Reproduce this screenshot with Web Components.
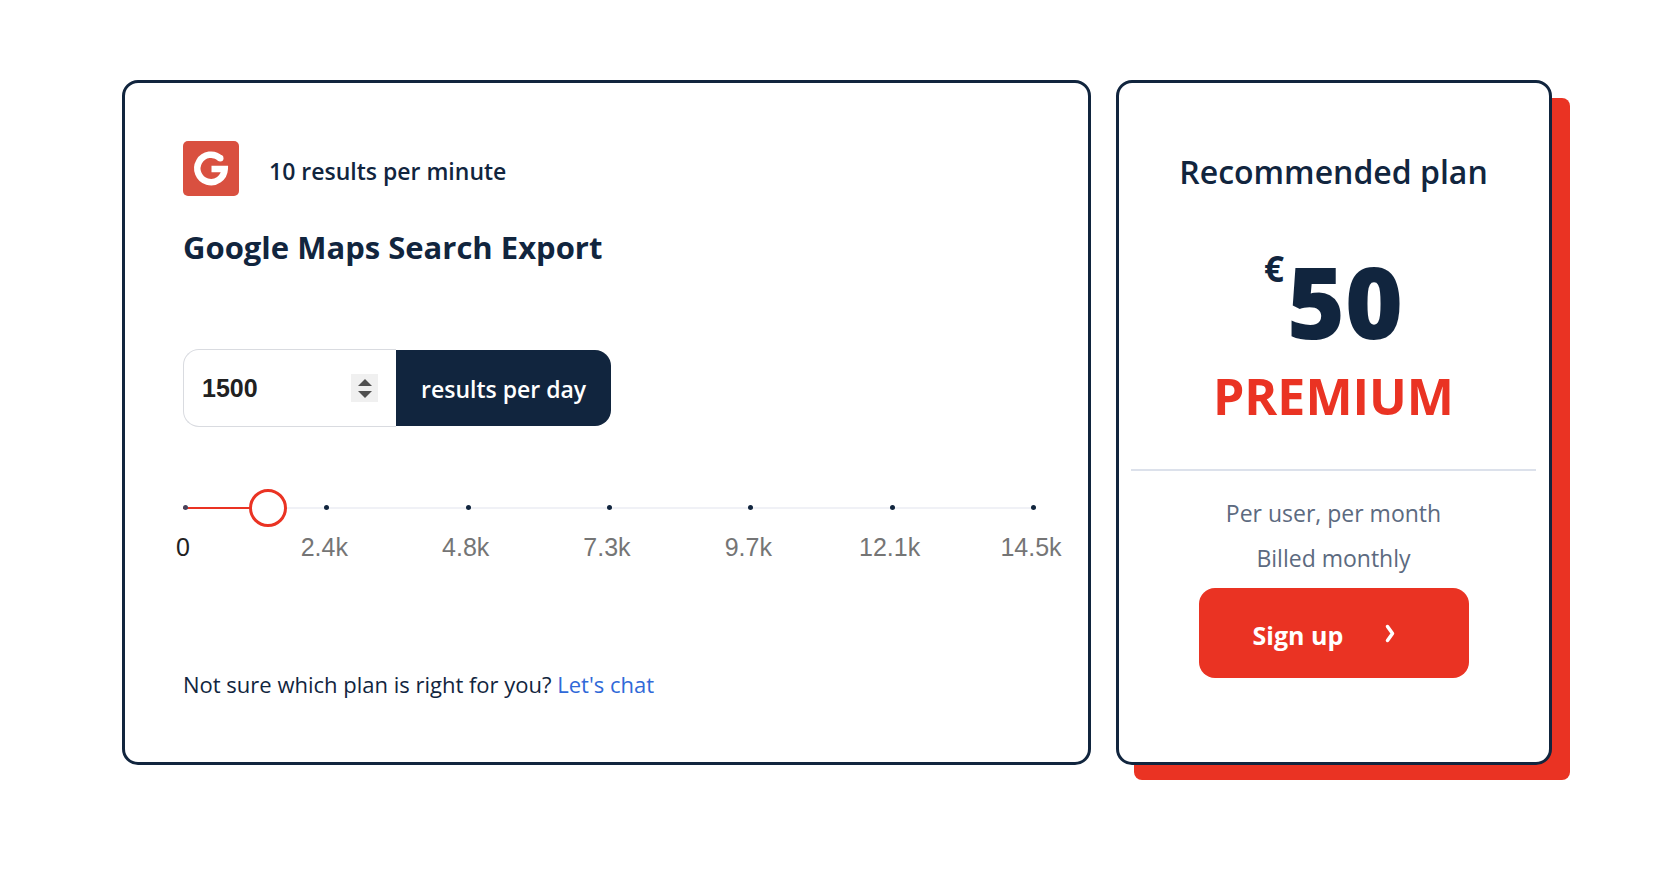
<!DOCTYPE html>
<html lang="en">
<head>
  <meta charset="utf-8">
  <meta name="viewport" content="width=device-width, initial-scale=1">
  <title>Pricing</title>
  <style>
    :root {
      --navy: #11253e;
      --red: #ea3323;
      --blue: #3069d8;
      --muted: #5c6a80;
      --sans: 'Open Sans', 'Noto Sans', sans-serif;
      --arial: 'Liberation Sans', Arial, sans-serif;
    }

    body {
      margin: 0;
      background: #fff;
      color: var(--navy);
      font-family: var(--sans);
    }
  </style>
</head>
<body>
  <pricing-page>
    <plan-card>
      <service-header rate="10 results per minute">Google Maps Search Export</service-header>
      <quantity-field value="1500" unit="results per day"></quantity-field>
      <result-slider value="1500" max="14500" marks="0,2.4k,4.8k,7.3k,9.7k,12.1k,14.5k"></result-slider>
      <help-line link="Let's chat">Not sure which plan is right for you?</help-line>
    </plan-card>
    <plan-card raised>
      <plan-summary currency="€" price="50" plan="PREMIUM">
        <span slot="title">Recommended plan</span>
        <span slot="terms">Per user, per month</span>
        <span slot="terms">Billed monthly</span>
        <primary-button slot="action" text="Sign up"></primary-button>
      </plan-summary>
    </plan-card>
  </pricing-page>

  <script>
    class pricingPage extends HTMLElement {
      constructor() {
        super();
        this.attachShadow({ mode: 'open' });
      }

      connectedCallback() {
        this.shadowRoot.innerHTML = `
          <style>
            :host {
              display: grid;
              grid-template-columns: 969fr 436fr;
              gap: 25px;
              padding: 80px 128px 80px 122px;
            }
          </style>
          <slot></slot>
        `;
      }
    }

    customElements.define('pricing-page', pricingPage);

    class planCard extends HTMLElement {
      constructor() {
        super();
        this.attachShadow({ mode: 'open' });
      }

      connectedCallback() {
        this.shadowRoot.innerHTML = `
          <style>
            :host {
              display: block;
              position: relative;
              z-index: 0;
            }
            .card {
              box-sizing: border-box;
              height: 100%;
              padding: 58px 57px 62px 58px;
              background: #fff;
              border: 3px solid var(--navy);
              border-radius: 16px;
            }
            :host([raised]) .card {
              padding: 67px 13px 62px 12px;
            }
            /* solid red slab behind the card */
            :host([raised])::before {
              content: '';
              position: absolute;
              z-index: -1;
              inset: 18px -18px -15px 18px;
              background: var(--red);
              border-radius: 8px;
            }
          </style>
          <div class="card"><slot></slot></div>
        `;
      }
    }

    customElements.define('plan-card', planCard);

    class serviceHeader extends HTMLElement {
      constructor() {
        super();
        this.attachShadow({ mode: 'open' });
      }

      connectedCallback() {
        this.shadowRoot.innerHTML = `
          <style>
            :host {
              display: block;
            }
            .row {
              display: flex;
              align-items: flex-start;
              gap: 30px;
            }
            svg {
              width: 56px;
              height: 55px;
              flex: none;
            }
            p {
              margin: 0;
              font-size: 23px;
              font-weight: 600;
              line-height: 60px;
            }
            h2 {
              margin: 26px 0 0;
              font-size: 31px;
              font-weight: 700;
              line-height: 40px;
            }
          </style>
          <div class="row">
            <svg viewBox="0 0 56 55" aria-hidden="true">
              <rect width="56" height="55" rx="5" fill="#d95040"/>
              <path d="M37.500 17.500 A13.700 13.700 0 1 0 41.700 28 H28.500" fill="none" stroke="#fff" stroke-width="6.500"/>
              <circle cx="37.300" cy="17.300" r="3.200" fill="#fff"/>
            </svg>
            <p>${this.getAttribute('rate')}</p>
          </div>
          <h2><slot></slot></h2>
        `;
      }
    }

    customElements.define('service-header', serviceHeader);

    class quantityField extends HTMLElement {
      constructor() {
        super();
        this.attachShadow({ mode: 'open' });
      }

      connectedCallback() {
        this.shadowRoot.innerHTML = `
          <style>
            :host {
              display: flex;
              margin-top: 82px;
            }
            .box {
              box-sizing: border-box;
              display: flex;
              align-items: center;
              width: 213px;
              height: 78px;
              padding: 0 18px;
              border: 1px solid #d9dbe0;
              border-right: 0;
              border-radius: 16px 0 0 16px;
            }
            input {
              flex: 1;
              min-width: 0;
              padding: 0;
              border: 0;
              outline: 0;
              background: none;
              color: #212121;
              font: 700 25px/30px var(--arial);
              appearance: textfield;
            }
            input::-webkit-inner-spin-button {
              display: none;
            }
            .spin {
              display: flex;
              flex-direction: column;
              width: 27px;
              height: 28px;
              background: #f0f0f0;
            }
            .spin button {
              display: flex;
              flex: 1;
              justify-content: center;
              align-items: flex-end;
              padding: 0 0 2px;
              border: 0;
              background: none;
            }
            .spin button:last-child {
              align-items: flex-start;
              padding: 3px 0 0;
            }
            .spin svg {
              width: 14px;
              height: 7px;
              fill: #505050;
            }
            label {
              display: flex;
              align-items: center;
              height: 74px;
              margin: 1px 0;
              padding: 2px 25px 0;
              background: var(--navy);
              border-radius: 0 16px 16px 0;
              color: #fff;
              font-size: 23px;
              font-weight: 600;
            }
          </style>
          <div class="box">
            <input id="quantity" type="number" min="0" value="${this.getAttribute('value')}">
            <span class="spin">
              <button type="button" aria-label="Increase"><svg viewBox="0 0 14 7"><path d="M7 0L14 7H0z"/></svg></button>
              <button type="button" aria-label="Decrease"><svg viewBox="0 0 14 7"><path d="M0 0H14L7 7z"/></svg></button>
            </span>
          </div>
          <label for="quantity">${this.getAttribute('unit')}</label>
        `;

        const input = this.shadowRoot.querySelector('input');
        const [up, down] = this.shadowRoot.querySelectorAll('button');
        up.addEventListener('click', () => input.stepUp());
        down.addEventListener('click', () => input.stepDown());
      }
    }

    customElements.define('quantity-field', quantityField);

    class resultSlider extends HTMLElement {
      constructor() {
        super();
        this.attachShadow({ mode: 'open' });
      }

      connectedCallback() {
        const marks = this.getAttribute('marks').split(',');
        const value = this.getAttribute('value');
        const max = this.getAttribute('max');

        this.shadowRoot.innerHTML = `
          <style>
            :host {
              display: block;
              margin-top: 62px;
            }
            .track {
              display: grid;
              align-items: center;
            }
            .track > * {
              grid-area: 1 / 1;
            }
            .rail {
              height: 2px;
              background: #f0f1f6;
            }
            .fill {
              width: calc(${value} / ${max} * 100%);
              height: 2px;
              background: var(--red);
            }
            .dots, .labels {
              display: flex;
              justify-content: space-between;
            }
            .dots {
              padding-bottom: 1px;
            }
            .dots i {
              width: 0;
            }
            .dots i::before {
              content: '';
              display: block;
              width: 5px;
              height: 5px;
              border-radius: 50%;
              background: var(--navy);
            }
            .dots i:first-child::before {
              background: #47415a;
            }
            input {
              width: calc(100% + 41px);
              height: 38px;
              margin: 0 -19px 0 -22px;
              background: none;
              appearance: none;
            }
            input::-webkit-slider-thumb {
              box-sizing: border-box;
              width: 38px;
              height: 38px;
              border: 3px solid var(--red);
              border-radius: 50%;
              background: #fff;
              appearance: none;
            }
            .labels {
              margin-top: 5px;
              color: #757575;
              font: 25px/30px var(--arial);
            }
            .labels span {
              display: flex;
              justify-content: center;
              width: 0;
            }
            .labels span:first-child {
              color: #212121;
            }
          </style>
          <div class="track">
            <div class="rail"><div class="fill"></div></div>
            <div class="dots">${marks.map(() => '<i></i>').join('')}</div>
            <input type="range" min="0" max="${max}" value="${value}" aria-label="Results per day">
          </div>
          <div class="labels">${marks.map((mark) => `<span>${mark}</span>`).join('')}</div>
        `;

        const fill = this.shadowRoot.querySelector('.fill');
        this.shadowRoot.querySelector('input').addEventListener('input', (e) => {
          fill.style.width = `${(e.target.value / max) * 100}%`;
        });
      }
    }

    customElements.define('result-slider', resultSlider);

    class helpLine extends HTMLElement {
      constructor() {
        super();
        this.attachShadow({ mode: 'open' });
      }

      connectedCallback() {
        this.shadowRoot.innerHTML = `
          <style>
            :host {
              display: block;
              margin-top: 106px;
              font-size: 22px;
              line-height: 32px;
            }
            a {
              color: var(--blue);
              text-decoration: none;
            }
            a:hover {
              text-decoration: underline;
            }
          </style>
          <slot></slot> <a href="#chat">${this.getAttribute('link')}</a>
        `;
      }
    }

    customElements.define('help-line', helpLine);

    class planSummary extends HTMLElement {
      constructor() {
        super();
        this.attachShadow({ mode: 'open' });
      }

      connectedCallback() {
        this.shadowRoot.innerHTML = `
          <style>
            :host {
              display: block;
              text-align: center;
            }
            h3 {
              margin: 0;
              font-size: 32px;
              font-weight: 600;
              line-height: 44px;
            }
            .price {
              display: flex;
              justify-content: center;
              gap: 3px;
              margin-top: 57px;
              font-size: 99px;
              font-weight: 800;
              line-height: 100px;
            }
            .currency {
              font-size: 35px;
              font-weight: 700;
              line-height: 36px;
            }
            .plan {
              margin-top: 15px;
              color: var(--red);
              font-size: 50px;
              font-weight: 700;
              line-height: 60px;
            }
            hr {
              height: 2px;
              margin: 43px 0 20px;
              border: 0;
              background: #dce1eb;
            }
            .terms {
              display: flex;
              flex-direction: column;
              color: var(--muted);
              font-size: 23px;
              line-height: 45px;
            }
            .action {
              display: flex;
              justify-content: center;
              margin-top: 7px;
            }
          </style>
          <h3><slot name="title"></slot></h3>
          <div class="price">
            <span class="currency">${this.getAttribute('currency')}</span>
            <span>${this.getAttribute('price')}</span>
          </div>
          <div class="plan">${this.getAttribute('plan')}</div>
          <hr>
          <div class="terms"><slot name="terms"></slot></div>
          <div class="action"><slot name="action"></slot></div>
        `;
      }
    }

    customElements.define('plan-summary', planSummary);

    class primaryButton extends HTMLElement {
      constructor() {
        super();
        this.attachShadow({ mode: 'open' });
      }

      connectedCallback() {
        this.shadowRoot.innerHTML = `
          <style>
            :host {
              display: block;
            }
            button {
              display: flex;
              align-items: center;
              gap: 40px;
              width: 270px;
              height: 90px;
              padding: 3px 54px 0;
              border: 0;
              border-radius: 16px;
              background: var(--red);
              color: #fff;
              font: 700 25px/32px var(--sans);
              cursor: pointer;
            }
            button:hover {
              background: #d42a1b;
            }
            svg {
              width: 12px;
              height: 22px;
            }
          </style>
          <button type="button">
            <span>${this.getAttribute('text')}</span>
            <svg viewBox="0 0 12 22" fill="none" stroke="#fff" stroke-width="3.500" stroke-linecap="round" stroke-linejoin="round" aria-hidden="true">
              <path d="M4.500 2.500L9.500 9.500L4.500 16.500"/>
            </svg>
          </button>
        `;
      }
    }

    customElements.define('primary-button', primaryButton);
  </script>
</body>
</html>
